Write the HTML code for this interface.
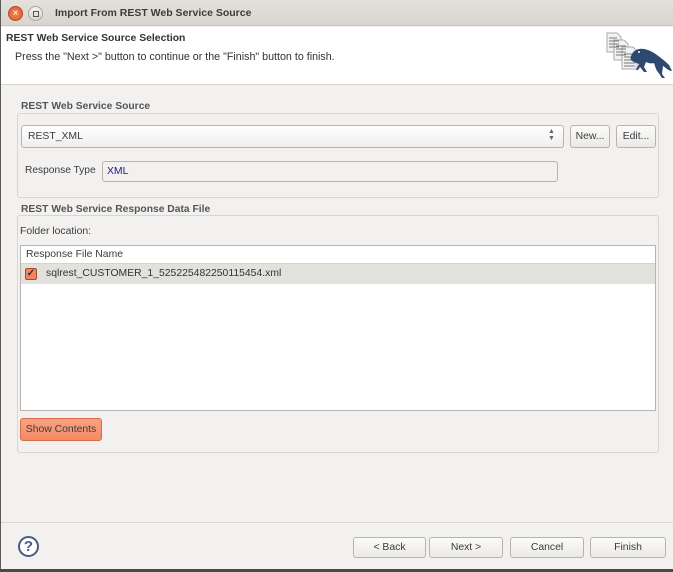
<!DOCTYPE html>
<html><head><meta charset="utf-8"><style>
*{margin:0;padding:0;box-sizing:border-box}
body{width:673px;height:572px;overflow:hidden;background:#f2f1f0;font-family:"Liberation Sans",sans-serif;font-size:10.4px;color:#3c3c3c;position:relative}
.a{position:absolute}
.btn{position:absolute;border:1px solid #b8b3ad;border-radius:3px;background:linear-gradient(#fbfbfa,#ebe9e7);text-align:center;color:#3c3c3c;font-size:10.4px}
.grp{position:absolute;border:1px solid #d9d6d2;border-radius:3px}
.lbl{position:absolute;background:#f2f1f0;font-weight:bold;color:#555;padding:0 1px;font-size:10.3px}
</style></head><body>
<div class="a" style="left:0;top:0;width:673px;height:26px;background:linear-gradient(#e4e1dc,#d8d4ce);border-bottom:1px solid #c9c5bf"></div>
<div class="a" style="left:8px;top:6px;width:15px;height:15px;border-radius:50%;background:radial-gradient(#f08a5d,#d8562a);border:1px solid #b14a26;color:#fff;font-size:10px;line-height:13px;text-align:center">×</div>
<div class="a" style="left:28px;top:6px;width:15px;height:15px;border-radius:50%;background:linear-gradient(#f4f2ef,#d9d6d1);border:1px solid #a9a49d"><div class="a" style="left:4px;top:4px;width:6px;height:6px;border:1px solid #555"></div></div>
<div class="a" style="left:55px;top:7px;font-size:10.5px;color:#3c3c3c;font-weight:bold">Import From REST Web Service Source</div>
<div class="a" style="left:0;top:27px;width:673px;height:58px;background:#fff;border-bottom:1px solid #d6d3cf"></div>
<div class="a" style="left:0;top:0;width:1px;height:572px;background:#5a5a5a"></div>
<div class="a" style="left:6px;top:33px;font-weight:bold;font-size:10.4px;color:#333">REST Web Service Source Selection</div>
<div class="a" style="left:15px;top:51px;font-size:10.7px;color:#333">Press the "Next &gt;" button to continue or the "Finish" button to finish.</div>
<svg class="a" style="left:595px;top:28px" width="78" height="55" viewBox="0 0 78 55">
<g fill="#f2f2f2" stroke="#aaa"><path d="M12 5h10l4 4v15h-14z"/><path d="M19 12h10l4 4v16h-14z"/><path d="M27 19h11l4 4v18h-15z"/></g>
<g stroke="#777" stroke-width="1"><path d="M14 10h8M14 13h10M14 16h10M14 19h10M21 18h10M21 21h10M21 24h10M21 27h10M29 26h11M29 29h11M29 32h11M29 35h11M29 38h11"/></g>
<path d="M37 26c2-4 7-6 12-5c5 1 9 3 13 6c4 3 8 6 12 10l3 6c-3 0-6-3-9-5l-1 8l3 4h-3l-4-6c-2-2-3-6-4-9c-3 1-6 0-8-1l-2 5l3 5h-3l-4-5l-2 3h-2l3-6c-3-1-6-2-8-4c-1-2 0-4 1-6z" fill="#2d4a6e"/>
<circle cx="44" cy="24" r="1" fill="#fff"/>
</svg>
<div class="grp" style="left:17px;top:113px;width:642px;height:85px"></div>
<div class="lbl" style="left:20px;top:101px">REST Web Service Source</div>
<div class="a" style="left:21px;top:125px;width:543px;height:23px;border:1px solid #b8b3ad;border-radius:3px;background:linear-gradient(#fff,#f0eeec);padding:5px 6px">REST_XML</div>
<div class="a" style="left:548px;top:128px;font-size:7px;color:#666;line-height:7px">▲<br>▼</div>
<div class="btn" style="left:570px;top:125px;width:40px;height:23px;line-height:21px">New...</div>
<div class="btn" style="left:616px;top:125px;width:40px;height:23px;line-height:21px">Edit...</div>
<div class="a" style="left:25px;top:165px;font-size:10.2px">Response Type</div>
<div class="a" style="left:102px;top:161px;width:456px;height:21px;border:1px solid #b8b3ad;border-radius:3px;padding:4px 4px;color:#1a1a8c">XML</div>
<div class="grp" style="left:17px;top:215px;width:642px;height:238px"></div>
<div class="lbl" style="left:20px;top:204px">REST Web Service Response Data File</div>
<div class="a" style="left:20px;top:226px">Folder location:</div>
<div class="a" style="left:20px;top:245px;width:636px;height:166px;background:#fff;border:1px solid #b8b3ad"></div>
<div class="a" style="left:21px;top:246px;width:634px;height:18px;border-bottom:1px solid #d6d3cf;padding:3px 5px">Response File Name</div>
<div class="a" style="left:21px;top:264px;width:634px;height:20px;background:#e3e1de"></div>
<div class="a" style="left:25px;top:268px;width:12px;height:12px;border:1px solid #a0502e;border-radius:2px;background:#f1865c;color:#333;font-size:10px;line-height:10px;text-align:center;font-weight:bold">✓</div>
<div class="a" style="left:46px;top:268px;color:#333">sqlrest_CUSTOMER_1_525225482250115454.xml</div>
<div class="a" style="left:20px;top:418px;width:82px;height:23px;border:1px solid #d86c48;border-radius:3px;background:linear-gradient(#f9a283,#f38a64);line-height:21px;text-align:center;color:#3c3c3c">Show Contents</div>
<div class="a" style="left:1px;top:522px;width:672px;height:1px;background:#dad7d3"></div>
<div class="a" style="left:18px;top:536px;width:21px;height:21px;border-radius:50%;border:2px solid #4a5a80;background:#fff;text-align:center;font-weight:bold;font-size:15px;line-height:17px;color:#4a5a80">?</div>
<div class="btn" style="left:353px;top:537px;width:73px;height:21px;line-height:19px">&lt; Back</div>
<div class="btn" style="left:429px;top:537px;width:74px;height:21px;line-height:19px">Next &gt;</div>
<div class="btn" style="left:510px;top:537px;width:74px;height:21px;line-height:19px">Cancel</div>
<div class="btn" style="left:590px;top:537px;width:76px;height:21px;line-height:19px">Finish</div>
<div class="a" style="left:0;top:569px;width:673px;height:3px;background:#4a4a4a"></div>
</body></html>
